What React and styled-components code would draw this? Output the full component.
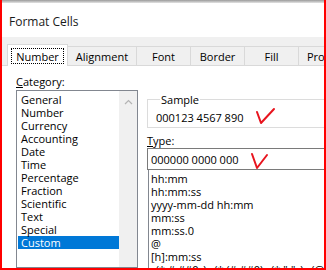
import React from 'react'
import styled, { createGlobalStyle } from 'styled-components'

const GlobalStyle = createGlobalStyle`
  * { box-sizing: border-box; }
  body {
    margin: 0;
    background: #fff;
    font-family: "Open Sans", "Noto Sans", sans-serif;
    font-size: 11px;
    color: #000;
  }
`

const categories = [
  'General', 'Number', 'Currency', 'Accounting', 'Date', 'Time',
  'Percentage', 'Fraction', 'Scientific', 'Text', 'Special', 'Custom',
]

const formats = [
  'hh:mm', 'hh:mm:ss', 'yyyy-mm-dd hh:mm', 'mm:ss', 'mm:ss.0', '@',
  '[h]:mm:ss', '_(* #,##0_);_(* (#,##0);_(* "-"_);_(@_)',
]

const tabs = [
  { name: 'Number', width: 61 },
  { name: 'Alignment', width: 69 },
  { name: 'Font', width: 54 },
  { name: 'Border', width: 54 },
  { name: 'Fill', width: 54 },
  { name: 'Protection', width: 70 },
]

export default function App() {
  return (
    <>
      <GlobalStyle />
      <Window>
        <TopEdge />
        <TitleBar>Format Cells</TitleBar>
        <TabStrip>
          {tabs.map((t, i) =>
            i === 0 ? (
              <ActiveTab key={t.name} $w={t.width}>
                <Focus>{t.name}</Focus>
              </ActiveTab>
            ) : (
              <Tab key={t.name} $w={t.width}>{t.name}</Tab>
            )
          )}
        </TabStrip>
        <Panel>
          <CategoryColumn>
            <Label><u>C</u>ategory:</Label>
            <ListBox>
              <Items>
                {categories.map((c) => (
                  <Item key={c} $selected={c === 'Custom'}>{c}</Item>
                ))}
              </Items>
              <ScrollTrack>
                <svg width="9" height="6" viewBox="0 0 9 6">
                  <path d="M1 5 L4.5 1.5 L8 5" fill="none" stroke="#b4b4b4" strokeWidth="1.2" />
                </svg>
              </ScrollTrack>
            </ListBox>
          </CategoryColumn>
          <DetailColumn>
            <Group>
              <Legend>Sample</Legend>
              <SampleValue>
                000123 4567 890
                <Check width="19" height="16" viewBox="0 0 19 16">
                  <path d="M1 4 L5 15 L18 1" fill="none" stroke="#e8141e" strokeWidth="2" strokeLinecap="round" strokeLinejoin="round" />
                </Check>
              </SampleValue>
            </Group>
            <TypeLabel><u>T</u>ype:</TypeLabel>
            <TypeInput>
              000000 0000 000
              <Check width="17" height="17" viewBox="0 0 17 17" $shift={2}>
                <path d="M1 2 L6 16 L16 3" fill="none" stroke="#e8141e" strokeWidth="2" strokeLinecap="round" strokeLinejoin="round" />
              </Check>
            </TypeInput>
            <FormatList>
              {formats.map((f) => (
                <FormatRow key={f}>{f}</FormatRow>
              ))}
            </FormatList>
          </DetailColumn>
        </Panel>
      </Window>
    </>
  )
}

const Window = styled.div`
  width: 326px;
  height: 270px;
  border: 2px solid #ff0000;
  border-top: none;
  overflow: hidden;
  display: flex;
  flex-direction: column;
  background: #fff;
`
const TopEdge = styled.div`
  height: 3px;
  flex: none;
  background: linear-gradient(#9a9a9a, #e4e4e4);
`
const TitleBar = styled.div`
  height: 34px;
  flex: none;
  display: flex;
  align-items: center;
  padding: 2px 0 0 7px;
  font-size: 12px;
  color: #1a1a1a;
`
const TabStrip = styled.div`
  height: 29px;
  flex: none;
  display: flex;
  align-items: flex-end;
  padding-left: 5px;
  background: #f0f0f0;
  border-bottom: 1px solid #d9d9d9;
  white-space: nowrap;
`
const Tab = styled.div`
  width: ${(p) => p.$w}px;
  flex: none;
  height: 19px;
  display: flex;
  align-items: center;
  justify-content: center;
  border-top: 1px solid #d9d9d9;
  border-right: 1px solid #d9d9d9;
  padding-top: 1px;
`
const ActiveTab = styled.div`
  width: ${(p) => p.$w}px;
  flex: none;
  height: 22px;
  margin-bottom: -1px;
  background: #fff;
  border: 1px solid #d9d9d9;
  border-bottom: none;
  padding: 3px 3px 2px 3px;
  position: relative;
`
const Focus = styled.span`
  display: flex;
  height: 16px;
  align-items: center;
  justify-content: center;
  border: 1px dotted #000;
`
const Panel = styled.div`
  flex: 1;
  display: flex;
  padding: 8px 0 0 14px;
  min-height: 0;
`
const CategoryColumn = styled.div`
  width: 122px;
  flex: none;
  display: flex;
  flex-direction: column;
`
const Label = styled.div`
  line-height: 15px;
  height: 15px;
`
const ListBox = styled.div`
  height: 200px;
  margin-top: 1px;
  border: 1px solid #828790;
  display: flex;
`
const Items = styled.div`
  flex: 1;
  padding: 2px 0 0 1px;
`
const Item = styled.div`
  height: 13px;
  line-height: 13px;
  padding-left: 3px;
  background: ${(p) => (p.$selected ? '#0078d7' : 'transparent')};
  color: ${(p) => (p.$selected ? '#fff' : '#000')};
`
const ScrollTrack = styled.div`
  width: 18px;
  flex: none;
  background: #f0f0f0;
  display: flex;
  justify-content: center;
  padding-top: 8px;
  svg { display: block; }
`
const DetailColumn = styled.div`
  width: 200px;
  flex: none;
  margin-left: 9px;
  display: flex;
  flex-direction: column;
`
const Group = styled.fieldset`
  margin: 18px 0 0 0;
  padding: 3px 0 2px 8px;
  border: 1px solid #dcdcdc;
  min-width: 0;
`
const Legend = styled.legend`
  padding: 0 1px;
  margin-left: 4px;
  line-height: 15px;
`
const SampleValue = styled.div`
  height: 15px;
  display: flex;
  align-items: center;
  white-space: nowrap;
`
const Check = styled.svg`
  flex: none;
  margin-left: 13px;
  margin-top: ${(p) => p.$shift || -3}px;
  overflow: visible;
`
const TypeLabel = styled(Label)`
  margin-top: 5px;
`
const TypeInput = styled.div`
  height: 22px;
  flex: none;
  border: 1px solid #7a7a7a;
  padding-left: 3px;
  display: flex;
  align-items: center;
  white-space: nowrap;
  position: relative;
  z-index: 1;
  background: transparent;
`
const FormatList = styled.div`
  margin: -1px 0 0 1px;
  height: 120px;
  border: 1px solid #828790;
  padding: 2px 0 0 2px;
`
const FormatRow = styled.div`
  height: 13px;
  line-height: 13px;
  white-space: nowrap;
`
